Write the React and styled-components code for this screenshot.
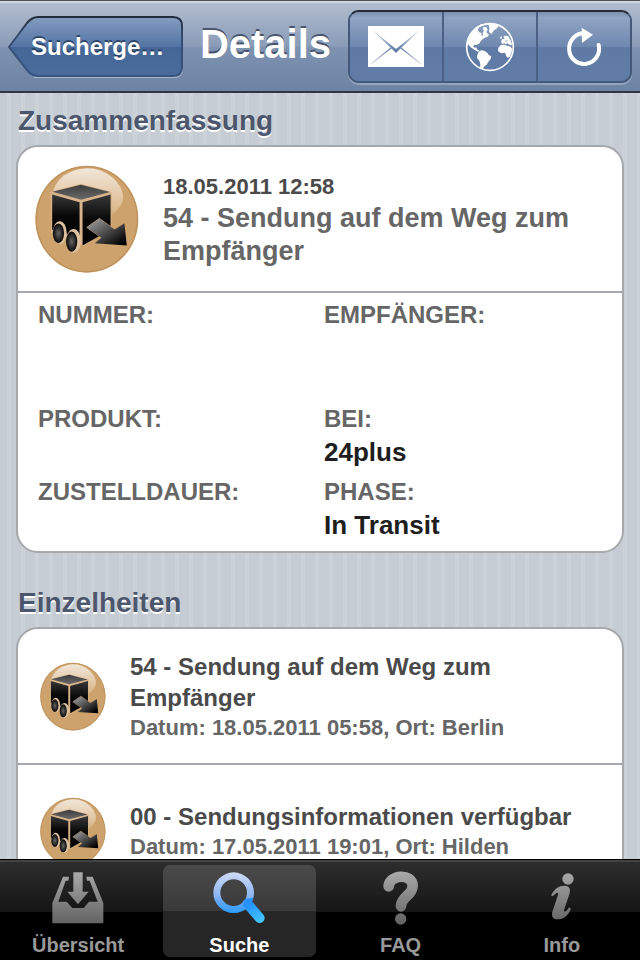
import React, { useId } from 'react';
import styled, { createGlobalStyle, css } from 'styled-components';

const GlobalStyle = createGlobalStyle`
    * {
        box-sizing: border-box;
    }

    body {
        margin: 0;
        font-family: "Liberation Sans", Arial, Helvetica, sans-serif;
        font-weight: bold;
        color: #4a4a4a;
    }

    h1, h2, h3, p, dl, dd, ul {
        margin: 0;
        padding: 0;
    }

    svg {
        display: block;
        flex: none;
    }
`;

const Screen = styled.div`
    display: flex;
    flex-direction: column;
    height: 100vh;
    /* pinstripes */
    background: repeating-linear-gradient(to right, #c5ccd4 0 7px, #cbd2d8 7px 11px, #c5ccd4 11px 14px);
`;

const Header = styled.header`
    flex: none;
    display: flex;
    align-items: center;
    gap: 8px;
    padding: 9px 8px 8px;
    border-top: 1px solid #4d5059;
    border-bottom: 2px solid #2d3642;
    background: linear-gradient(#b3becf, #8a9cb8 50%, #7e92b1 52%, #6d83a4);
    box-shadow: inset 0 2px 0 #cdd5df;
`;

const BackButton = styled.button`
    position: relative;
    flex: none;
    width: 175px;
    height: 62px;
    padding: 0 14px 0 23px;
    border: 0;
    background: none;
    color: #fff;
    font: bold 24px/60px "Liberation Sans", Arial, sans-serif;
    text-align: left;
    text-shadow: 0 -2px 0 rgba(20, 35, 65, 0.6);
    cursor: pointer;

    & > svg {
        position: absolute;
        inset: 0;
    }

    & > span {
        position: relative;
    }
`;

const Title = styled.h1`
    flex: 1;
    padding-bottom: 5px;
    color: #fff;
    font-size: 40px;
    line-height: 60px;
    text-align: center;
    text-shadow: 0 -2px 0 rgba(40, 50, 70, 0.7);
`;

const ButtonGroup = styled.div`
    flex: none;
    display: flex;
    height: 73px;
    border: 2px solid #44597a;
    border-top-color: #252d3a;
    border-radius: 11px;
    overflow: hidden;
    box-shadow: 0 2px 0 rgba(255, 255, 255, 0.25);
`;

const GroupButton = styled.button`
    display: flex;
    align-items: center;
    justify-content: center;
    width: 92px;
    padding: 0;
    border: 0;
    background: linear-gradient(#7d90b0, #90a4c3 8%, #6f88af 50%, #5f7ba5 51%, #607da7);
    cursor: pointer;

    & + & {
        width: 94px;
        border-left: 2px solid #4a6185;
    }
`;

const Content = styled.main`
    flex: 1;
    min-height: 0;
    overflow-y: auto;
    scrollbar-width: none;
    padding: 0 16px;
`;

const SectionTitle = styled.h2`
    margin: ${(props) => (props.$first ? 11 : 33)}px 0 7px 2px;
    color: #4c566c;
    font-size: 28px;
    line-height: 34px;
    text-shadow: 0 2px 0 #fff;
`;

const Card = styled.section`
    border: 2px solid #a6a8ab;
    border-radius: 22px;
    background: #fff;
    overflow: hidden;
`;

const Summary = styled.div`
    display: flex;
    align-items: center;
    gap: 24px;
    height: 146px;
    padding: 0 18px 0 17px;
    border-bottom: 2px solid #a6a8ab;
`;

const SummaryDate = styled.p`
    color: #4a4a4a;
    font-size: 22px;
    line-height: 31px;
`;

const SummaryStatus = styled.h3`
    color: #666;
    font-size: 27px;
    line-height: 33px;
`;

const Fields = styled.dl`
    display: grid;
    grid-template-columns: 1fr 1fr;
    gap: 7px 8px;
    padding: 6px 20px 9px;
`;

const FieldLabel = styled.dt`
    color: #666;
    font-size: 24px;
    line-height: 32px;
`;

const FieldValue = styled.dd`
    min-height: ${(props) => (props.$tall ? 65 : 34)}px;
    color: #1e1e1e;
    font-size: 26px;
    line-height: 34px;
`;

const Events = styled.ul`
    list-style: none;
`;

const Event = styled.li`
    display: flex;
    align-items: center;
    gap: 24px;
    min-height: 134px;
    padding: 0 22px;

    & + & {
        border-top: 2px solid #a6a8ab;
    }
`;

const EventTitle = styled.h3`
    color: #4a4a4a;
    font-size: 24px;
    line-height: 31px;
`;

const EventMeta = styled.p`
    color: #666;
    font-size: 22px;
    line-height: 29px;
`;

const TabBar = styled.nav`
    flex: none;
    display: grid;
    grid-template-columns: repeat(4, 1fr);
    gap: 9px;
    padding: 5px 2px 3px;
    border-top: 1px solid #000;
    background: linear-gradient(#434343 0 2px, #2e2e2e 2px, #151515 52px, #000 52px);
`;

const Tab = styled.a`
    display: flex;
    flex-direction: column;
    align-items: center;
    justify-content: space-between;
    height: 92px;
    padding: 6px 0 0;
    border-radius: 7px;
    color: #999;
    font-size: 20px;
    line-height: 24px;
    text-decoration: none;

    ${(props) =>
        props.$active &&
        css`
            color: #fff;
            background: linear-gradient(#4a4a4a, #393939 50%, #262626 50%, #262626);
        `}
`;

const BackShape = () => (
    <svg width="175" height="62" viewBox="0 0 175 62" aria-hidden="true">
        <defs>
            <linearGradient id="back-fill" x2="0" y2="1">
                <stop offset="0" stopColor="#849cbf" />
                <stop offset="0.5" stopColor="#5375a5" />
                <stop offset="0.52" stopColor="#456797" />
                <stop offset="1" stopColor="#4a6c9d" />
            </linearGradient>
            <linearGradient id="back-line" x2="0" y2="1">
                <stop offset="0" stopColor="#222b3a" />
                <stop offset="0.3" stopColor="#34496c" />
                <stop offset="1" stopColor="#38557f" />
            </linearGradient>
        </defs>
        <path d="M26 61H166Q174 61 174 53" fill="none" stroke="#a8b6cb" strokeWidth="2" />
        <path
            d="M1 31L19 7Q24 1 30 1H165Q174 1 174 10V51Q174 60 165 60H30Q24 60 19 54Z"
            fill="url(#back-fill)"
            stroke="url(#back-line)"
            strokeWidth="2"
        />
    </svg>
);

const MailIcon = () => (
    <svg width="56" height="41" viewBox="0 0 56 41" aria-hidden="true">
        <defs>
            <linearGradient id="fold-left" x2="1">
                <stop offset="0" stopColor="#e1e6ee" />
                <stop offset="1" stopColor="#5c78a3" />
            </linearGradient>
            <linearGradient id="fold-right" x1="1" x2="0">
                <stop offset="0" stopColor="#e1e6ee" />
                <stop offset="1" stopColor="#5c78a3" />
            </linearGradient>
        </defs>
        <path d="M0 0H56V41H0Z" fill="#fff" />
        <path d="M3 3L28 23V27L25 24Z" fill="url(#fold-left)" />
        <path d="M53 3L28 23V27L31 24Z" fill="url(#fold-right)" />
        <path d="M3 38L23 22" stroke="url(#fold-left)" strokeWidth="1.3" />
        <path d="M53 38L33 22" stroke="url(#fold-right)" strokeWidth="1.3" />
    </svg>
);

const GlobeIcon = () => (
    <svg width="56" height="58" viewBox="0 0 168 174" aria-hidden="true">
        <circle cx="84" cy="87" r="70" fill="none" stroke="#fff" strokeWidth="5" />
        <g fill="#fff">
            <path d="M14 80Q17 48 44 27L57 19L70 17L63 23L52 27L47 36L52 43L58 45L59 53L63 53L62 44L66 38L62 33L65 26L73 27L77 35L73 43L81 50L77 56L66 60L57 68L51 77L43 81L37 80L33 85L38 89L43 88L45 94L52 98L48 101L37 95L26 88L20 80Z" />
            <path d="M79 16L106 18Q111 24 105 31L96 37L88 48L81 42L82 29Z" />
            <path d="M50 101L57 97L67 98L76 104L80 111L88 115L86 123L79 131L74 140L67 145L62 154L54 150L55 139L52 128L45 120L46 111Z" />
            <path d="M117 81L128 80L137 84L146 86L151 94L148 106L143 117L136 119L131 111L130 104L117 106L108 99L109 89Z" />
            <path d="M117 73L120 64L128 62L124 54L130 53L138 54L146 67L151 82L142 80L136 76L130 79L128 75L122 78Z" />
            <path d="M114 57L119 55L120 61L116 64ZM145 121L149 112L150 119Z" />
        </g>
        <path d="M129 70L137 68" fill="none" stroke="#6a85ae" strokeWidth="2" />
    </svg>
);

const ReloadIcon = () => (
    <svg width="50" height="50" viewBox="0 0 150 150" aria-hidden="true">
        <path d="M76 34A45 46 0 1 0 119 69" fill="none" stroke="#fff" strokeWidth="12" strokeLinecap="round" />
        <path d="M68 17L102 38L69 63Z" fill="#fff" />
    </svg>
);

// black parcel on a round cardboard badge, size is the width
const ParcelIcon = ({ size }) => {
    const id = useId();
    return (
        <svg width={size} height={Math.round(size * 1.04)} viewBox="43 44 315 327" aria-hidden="true">
            <defs>
                <linearGradient id={`${id}gloss`} x2="0" y2="1">
                    <stop offset="0" stopColor="#f1e6d8" />
                    <stop offset="0.6" stopColor="#e3c8a6" />
                    <stop offset="1" stopColor="#d4ae7d" />
                </linearGradient>
                <linearGradient id={`${id}top`} x2="0" y2="1">
                    <stop offset="0" stopColor="#3c3c3c" />
                    <stop offset="1" stopColor="#6a6a6a" />
                </linearGradient>
                <linearGradient id={`${id}side`} x2="0" y2="1">
                    <stop offset="0" stopColor="#383838" />
                    <stop offset="0.5" stopColor="#080808" />
                    <stop offset="1" stopColor="#000" />
                </linearGradient>
                <linearGradient id={`${id}arrow`} x2="1" y2="1">
                    <stop offset="0" stopColor="#aaa" />
                    <stop offset="0.5" stopColor="#4a4a4a" />
                    <stop offset="0.9" stopColor="#000" />
                </linearGradient>
                <radialGradient id={`${id}wheel`}>
                    <stop offset="0" stopColor="#666" />
                    <stop offset="1" stopColor="#060606" />
                </radialGradient>
            </defs>
            <ellipse cx="200" cy="208" rx="156" ry="162" fill="#cda26c" />
            <ellipse cx="200" cy="208" rx="153" ry="159" fill="none" stroke="#c0935c" strokeWidth="4" />
            <path
                d="M94 150Q94 104 130 76Q166 54 202 54Q244 54 278 82Q310 110 310 144Q308 172 272 198H120Q98 176 94 150Z"
                fill={`url(#${id}gloss)`}
            />
            <path d="M90 125L182 101L275 126V232L190 291L92 250Z" fill="#d9b48a" />
            <path d="M96 125L182 104L270 126L183 149Z" fill={`url(#${id}top)`} />
            <path d="M95 133L178 157V262L95 240Z" fill={`url(#${id}side)`} />
            <path d="M187 157L272 133V240L187 288Z" fill={`url(#${id}side)`} />
            <ellipse cx="118" cy="249" rx="21" ry="35" fill="#dcc0a0" />
            <ellipse cx="114" cy="251" rx="17" ry="30" fill={`url(#${id}wheel)`} />
            <ellipse cx="160" cy="274" rx="22" ry="36" fill="#dcc0a0" />
            <ellipse cx="154" cy="276" rx="17" ry="31" fill={`url(#${id}wheel)`} />
            <path
                d="M200 233L238 206L284 239L314 220L321 288L224 281L244 264Z"
                fill={`url(#${id}arrow)`}
                stroke="#cda26c"
                strokeWidth="3"
                paintOrder="stroke"
            />
        </svg>
    );
};

const GreyFill = ({ id }) => (
    <defs>
        <linearGradient id={id} gradientUnits="userSpaceOnUse" x1="0" y1="0" x2="0" y2="160">
            <stop offset="0" stopColor="#aaa" />
            <stop offset="1" stopColor="#626262" />
        </linearGradient>
    </defs>
);

const InboxIcon = () => (
    <svg width="54" height="54" viewBox="0 0 162 162" aria-hidden="true">
        <GreyFill id="inbox-fill" />
        <g fill="url(#inbox-fill)">
            <path d="M36 17H54L52 29H44L22 92H47L64 111H98L114 92H140L116 29H108L106 17H125L157 96V157H4V96Z" />
            <path d="M67 4H95V62H113L81 100L49 62H67Z" />
        </g>
    </svg>
);

const SearchIcon = () => (
    <svg width="54" height="54" viewBox="0 0 162 162" aria-hidden="true">
        <defs>
            <linearGradient id="ring-fill" x2="0" y2="1">
                <stop offset="0" stopColor="#cfdcf7" />
                <stop offset="0.6" stopColor="#88b4f2" />
                <stop offset="0.72" stopColor="#5fa6f5" />
                <stop offset="1" stopColor="#2d9cfb" />
            </linearGradient>
            <linearGradient id="handle-fill" gradientUnits="userSpaceOnUse" x1="105" y1="90" x2="140" y2="155">
                <stop offset="0" stopColor="#1e8bff" />
                <stop offset="1" stopColor="#43c6ff" />
            </linearGradient>
        </defs>
        <path d="M106 98L143 141" stroke="url(#handle-fill)" strokeWidth="30" strokeLinecap="round" />
        <path d="M65 4a61 61 0 1 0 0 122a61 61 0 1 0 0-122ZM65 25a40 40 0 1 1 0 80a40 40 0 1 1 0-80Z" fill="url(#ring-fill)" />
        <path d="M100 84L124 80L112 118L92 104Z" fill="#2791fc" />
    </svg>
);

const QuestionIcon = () => (
    <svg width="54" height="54" viewBox="0 0 162 162" aria-hidden="true">
        <GreyFill id="faq-fill" />
        <path
            d="M44 46C46 10 115 6 116 44C116 74 81 76 81 106"
            fill="none"
            stroke="url(#faq-fill)"
            strokeWidth="32"
            strokeLinecap="round"
        />
        <circle cx="80" cy="144" r="17" fill="url(#faq-fill)" />
    </svg>
);

const InfoIcon = () => (
    <svg width="54" height="54" viewBox="0 0 162 162" aria-hidden="true">
        <GreyFill id="info-fill" />
        <g fill="url(#info-fill)">
            <circle cx="99" cy="24" r="17" />
            <path d="M48 73C59 51 75 43 89 44C104 45 108 54 103 70L88 114C85 125 93 126 102 109L108 113C99 135 83 146 66 145C52 144 48 134 53 119L69 72C72 62 65 62 53 76Z" />
        </g>
    </svg>
);

const fields = [
    { label: 'NUMMER:', value: '', tall: true },
    { label: 'EMPFÄNGER:', value: '', tall: true },
    { label: 'PRODUKT:', value: '' },
    { label: 'BEI:', value: '24plus' },
    { label: 'ZUSTELLDAUER:', value: '' },
    { label: 'PHASE:', value: 'In Transit' },
];

const events = [
    {
        title: '54 - Sendung auf dem Weg zum Empfänger',
        meta: 'Datum: 18.05.2011 05:58, Ort: Berlin',
    },
    {
        title: '00 - Sendungsinformationen verfügbar',
        meta: 'Datum: 17.05.2011 19:01, Ort: Hilden',
    },
];

const tabs = [
    { label: 'Übersicht', icon: InboxIcon },
    { label: 'Suche', icon: SearchIcon, active: true },
    { label: 'FAQ', icon: QuestionIcon },
    { label: 'Info', icon: InfoIcon },
];

const App = () => (
    <Screen>
        <GlobalStyle />
        <Header>
            <BackButton type="button">
                <BackShape />
                <span>Sucherge…</span>
            </BackButton>
            <Title>Details</Title>
            <ButtonGroup>
                <GroupButton type="button" aria-label="E-Mail">
                    <MailIcon />
                </GroupButton>
                <GroupButton type="button" aria-label="Web">
                    <GlobeIcon />
                </GroupButton>
                <GroupButton type="button" aria-label="Aktualisieren">
                    <ReloadIcon />
                </GroupButton>
            </ButtonGroup>
        </Header>

        <Content>
            <SectionTitle $first>Zusammenfassung</SectionTitle>
            <Card>
                <Summary>
                    <ParcelIcon size={104} />
                    <div>
                        <SummaryDate>18.05.2011 12:58</SummaryDate>
                        <SummaryStatus>54 - Sendung auf dem Weg zum Empfänger</SummaryStatus>
                    </div>
                </Summary>
                <Fields>
                    {fields.map((field) => (
                        <div key={field.label}>
                            <FieldLabel>{field.label}</FieldLabel>
                            <FieldValue $tall={field.tall}>{field.value}</FieldValue>
                        </div>
                    ))}
                </Fields>
            </Card>

            <SectionTitle>Einzelheiten</SectionTitle>
            <Card>
                <Events>
                    {events.map((event) => (
                        <Event key={event.title}>
                            <ParcelIcon size={66} />
                            <div>
                                <EventTitle>{event.title}</EventTitle>
                                <EventMeta>{event.meta}</EventMeta>
                            </div>
                        </Event>
                    ))}
                </Events>
            </Card>
        </Content>

        <TabBar>
            {tabs.map(({ label, icon: TabIcon, active }) => (
                <Tab key={label} href="#" $active={active}>
                    <TabIcon />
                    {label}
                </Tab>
            ))}
        </TabBar>
    </Screen>
);

export default App;
